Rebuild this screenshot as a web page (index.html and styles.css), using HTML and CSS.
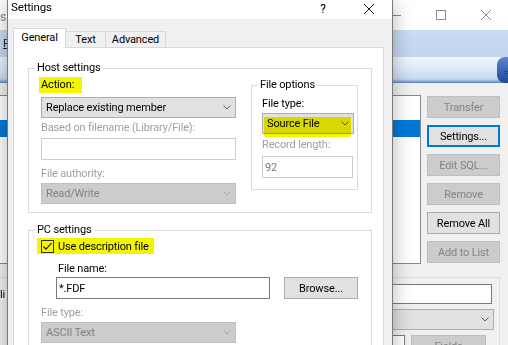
FILE: index.html
```html
<!DOCTYPE html>
<html lang="en">
<head>
  <meta charset="UTF-8">
  <title>Settings</title>
  <meta name="viewport" content="width=device-width, initial-scale=1.0">
  <link rel="stylesheet" href="styles.css">
</head>
<body>
  <div class="desktop">

    <!-- main window, behind the dialog -->
    <div class="app">
      <div class="app-title">
        <span class="app-name">s</span>
        <div class="caption">
          <span class="cap-btn"><svg width="10" height="10" viewBox="0 0 10 10"><path d="M0 5.5h10" stroke="#8c8c8c"/></svg></span>
          <span class="cap-btn"><svg width="10" height="10" viewBox="0 0 10 10"><rect x="0.5" y="0.5" width="9" height="9" fill="none" stroke="#8c8c8c"/></svg></span>
          <span class="cap-btn"><svg width="10" height="10" viewBox="0 0 10 10"><path d="M0 0l10 10M10 0L0 10" stroke="#8c8c8c"/></svg></span>
        </div>
      </div>
      <div class="ribbon"><span class="menu-key">F</span></div>
      <div class="ribbon-bar"><span class="ribbon-end">=</span></div>
      <div class="app-body">
        <div class="app-main">
          <div class="listbox"><div class="list-sel"></div></div>
          <div class="btn-col">
            <div class="btn off">Transfer</div>
            <div class="btn default">Settings...</div>
            <div class="btn off">Edit SQL...</div>
            <div class="btn off">Remove</div>
            <div class="btn">Remove All</div>
            <div class="btn off">Add to List</div>
          </div>
        </div>
        <div class="app-group">
          <div class="app-row">
            <span class="app-label">li</span>
            <span class="box app-text"></span>
          </div>
          <div class="app-row">
            <span class="combo app-combo"><span></span><svg class="chev" width="8" height="5" viewBox="0 0 8 5"><path d="M.5.5 4 4 7.5.5" fill="none" stroke="#606060"/></svg></span>
          </div>
          <div class="app-row">
            <span class="box app-small"></span>
            <span class="btn off app-fields">Fields</span>
          </div>
        </div>
      </div>
    </div>

    <!-- settings dialog -->
    <div class="dialog">
      <div class="dlg-title">
        <span class="dlg-name">Settings</span>
        <span class="dlg-cap help">?</span>
        <span class="dlg-cap"><svg width="10" height="10" viewBox="0 0 10 10"><path d="M0 0l10 10M10 0L0 10" stroke="#1a1a1a"/></svg></span>
      </div>
      <div class="dlg-body">
        <div class="tabs">
          <span class="tab active tab-general">General</span>
          <span class="tab tab-text">Text</span>
          <span class="tab tab-adv">Advanced</span>
        </div>
        <div class="tab-page">

          <fieldset class="group host">
            <legend>Host settings</legend>
            <div class="host-cols">
              <div class="host-left">
                <div class="label lbl-action"><span class="marker">Action:</span></div>
                <div class="combo mt4">
                  <span>Replace existing member</span>
                  <svg class="chev" width="8" height="5" viewBox="0 0 8 5"><path d="M.5.5 4 4 7.5.5" fill="none" stroke="#606060"/></svg>
                </div>
                <div class="label off mt2">Based on filename (Library/File):</div>
                <div class="box off mt2 tall"></div>
                <div class="label off mt6">File authority:</div>
                <div class="combo off mt1">
                  <span>Read/Write</span>
                  <svg class="chev" width="8" height="5" viewBox="0 0 8 5"><path d="M.5.5 4 4 7.5.5" fill="none" stroke="#a9a9a9"/></svg>
                </div>
              </div>

              <fieldset class="group file-opts">
                <legend>File options</legend>
                <div class="label mt3">File type:</div>
                <div class="combo marked mt1">
                  <span>Source File</span>
                  <svg class="chev" width="8" height="5" viewBox="0 0 8 5"><path d="M.5.5 4 4 7.5.5" fill="none" stroke="#606060"/></svg>
                </div>
                <div class="label off mt3">Record length:</div>
                <div class="box off mt3 tall rec">92</div>
              </fieldset>
            </div>
          </fieldset>

          <fieldset class="group pc">
            <legend>PC settings</legend>
            <div class="check-row">
              <svg width="13" height="13" viewBox="0 0 13 13"><rect x="0.5" y="0.5" width="12" height="12" fill="none" stroke="#333"/><path d="M2.5 6.5l2.5 2.7 5.5-6" fill="none" stroke="#222" stroke-width="1.2"/></svg>
              <span>Use description file</span>
            </div>
            <div class="label indent mt7">File name:</div>
            <div class="name-row">
              <div class="box name">*.FDF</div>
              <div class="btn browse">Browse...</div>
            </div>
            <div class="label off mt6">File type:</div>
            <div class="combo off mt1 pc-type">
              <span>ASCII Text</span>
              <svg class="chev" width="8" height="5" viewBox="0 0 8 5"><path d="M.5.5 4 4 7.5.5" fill="none" stroke="#a9a9a9"/></svg>
            </div>
          </fieldset>

        </div>
      </div>
    </div>

  </div>
</body>
</html>
```

FILE: styles.css
```css
* {
  box-sizing: border-box;
}

body {
  margin: 0;
  font-family: Roboto, "Liberation Sans", sans-serif;
  font-size: 11px;
  letter-spacing: -0.15px;
  color: #000;
  overflow: hidden;
}

.desktop {
  position: relative;
  width: 508px;
  height: 345px;
  overflow: hidden;
  background: #f0f0f0;
}

/* ---- main window behind ---- */

.app {
  position: absolute;
  left: 0;
  top: 0;
  width: 508px;
  height: 345px;
  display: flex;
  flex-direction: column;
  background: #f0f0f0;
}

.app-title {
  height: 30px;
  flex: none;
  background: #fff;
  display: flex;
  align-items: center;
}

.app-name {
  font-size: 12px;
  color: #8a8a8a;
  margin-top: 4px;
}

.caption {
  margin-left: auto;
  display: flex;
}

.cap-btn {
  width: 45px;
  height: 30px;
  display: flex;
  align-items: center;
  justify-content: center;
}

.ribbon {
  height: 27px;
  flex: none;
  padding-left: 3px;
  line-height: 27px;
  background: linear-gradient(#cbdcf3, #c1d5ef);
}

.menu-key {
  color: #1f1f1f;
  text-decoration: underline;
}

.ribbon-bar {
  height: 26px;
  flex: none;
  display: flex;
  justify-content: flex-end;
  background: linear-gradient(#f1f6fd, #dde9f9 45%, #c6d9f2 85%, #5a7fbf);
}

.ribbon-end {
  width: 11px;
  border-radius: 8px 0 0 8px;
  background: linear-gradient(#5d86cc, #1d4996);
  color: #0d1f40;
  font-size: 9px;
  line-height: 32px;
  text-align: right;
}

.app-body {
  flex: 1;
  padding-top: 12px;
}

.app-main {
  display: flex;
  gap: 6px;
}

.listbox {
  width: 421px;
  height: 169px;
  background: #fff;
  border: 1px solid #828790;
  border-left: none;
}

.list-sel {
  height: 17px;
  margin-top: 24px;
  background: #0078d7;
}

.btn-col {
  width: 73px;
  padding-top: 1px;
  display: flex;
  flex-direction: column;
  gap: 7px;
}

.btn {
  height: 22px;
  background: #e1e1e1;
  border: 1px solid #adadad;
  display: flex;
  align-items: center;
  justify-content: center;
  white-space: nowrap;
}

.btn.off {
  background: #cccccc;
  border-color: #bfbfbf;
  color: #838383;
}

.btn.default {
  border: 2px solid #0078d7;
}

.app-group {
  width: 500px;
  margin-top: 13px;
  padding-top: 6px;
  border-top: 1px solid #dcdcdc;
  border-right: 1px solid #dcdcdc;
  display: flex;
  flex-direction: column;
  gap: 5px;
}

.app-row {
  display: flex;
  align-items: center;
}

.app-label {
  width: 60px;
}

.app-text {
  flex: 1;
  height: 20px;
  margin-right: 7px;
}

.app-combo {
  flex: 1;
  margin-left: 60px;
  margin-right: 5px;
}

.app-small {
  width: 65px;
  height: 22px;
  margin-left: 340px;
}

.app-fields {
  width: 75px;
  margin-left: 6px;
  align-items: flex-start;
  padding-top: 4px;
}

/* ---- controls ---- */

.label {
  height: 16px;
  line-height: 16px;
  white-space: nowrap;
}

.label.off {
  color: #a0a0a0;
}

.indent {
  margin-left: 17px;
}

.box {
  background: #fff;
  border: 1px solid #7a7a7a;
  padding-left: 2px;
  display: flex;
  align-items: center;
  white-space: nowrap;
}

.box.off {
  border-color: #cccccc;
  color: #7a7a7a;
}

.box.tall {
  height: 22px;
}

.combo {
  position: relative;
  height: 21px;
  padding: 0 4px;
  background: #e1e1e1;
  border: 1px solid #adadad;
  display: flex;
  align-items: center;
  justify-content: space-between;
  white-space: nowrap;
}

.combo.off {
  background: #cccccc;
  border-color: #bfbfbf;
  color: #838383;
}

/* highlighter strokes */
.marker {
  display: inline-block;
  margin-left: -2px;
  padding: 0 8px 0 2px;
  background: #f5f500;
}

.combo.marked::after {
  content: "";
  position: absolute;
  left: 1px;
  right: 2px;
  top: 3px;
  bottom: -4px;
  background: #f5f500;
  border-radius: 0 0 3px 2px;
  mix-blend-mode: multiply;
}

.mt1 { margin-top: 1px; }
.mt2 { margin-top: 2px; }
.mt3 { margin-top: 3px; }
.mt4 { margin-top: 4px; }
.mt6 { margin-top: 6px; }
.mt7 { margin-top: 7px; }

/* ---- dialog ---- */

.dialog {
  position: absolute;
  left: 7px;
  top: -1px;
  width: 386px;
  height: 370px;
  display: flex;
  flex-direction: column;
  background: #f0f0f0;
  border: 1px solid #7a7a7a;
  box-shadow: 0 4px 18px rgba(0, 0, 0, 0.3);
}

.dlg-title {
  height: 19px;
  flex: none;
  display: flex;
  background: #fff;
}

.dlg-name {
  padding-left: 3px;
  font-size: 11.5px;
  line-height: 14px;
}

.dlg-cap {
  width: 46px;
  height: 18px;
  display: flex;
  align-items: center;
  justify-content: center;
  font-size: 12px;
}

.dlg-cap.help {
  margin-left: auto;
}

.dlg-body {
  flex: 1;
  padding: 9px 8px 0 5px;
  display: flex;
  flex-direction: column;
}

.tabs {
  height: 19px;
  flex: none;
  display: flex;
  align-items: flex-end;
  position: relative;
  z-index: 1;
}

.tab {
  height: 16px;
  line-height: 15px;
  text-align: center;
  background: #f0f0f0;
  border: 1px solid #d9d9d9;
  border-bottom: none;
}

.tab + .tab {
  margin-left: -1px;
}

.tab.active {
  height: 20px;
  line-height: 18px;
  margin-bottom: -1px;
  background: #fff;
}

.tab-general { width: 53px; }
.tab-text { width: 41px; }
.tab-adv { width: 61px; }

.tab-page {
  flex: 1;
  padding: 0 11px 0 14px;
  background: #fff;
  border: 1px solid #d9d9d9;
}

.group {
  margin: 0;
  min-width: 0;
  border: 1px solid #dcdcdc;
}

.group > legend {
  height: 16px;
  padding: 0 2px;
  line-height: 16px;
}

.host {
  margin-top: 12px;
  padding: 0 12px 8px 12px;
}

.host > legend,
.pc > legend {
  margin-left: -6px;
}

.host-cols {
  display: flex;
  align-items: flex-start;
}

.host-left {
  width: 195px;
}

.lbl-action {
  margin-top: 1px;
}

.file-opts {
  width: 107px;
  margin-left: 15px;
  margin-top: 1px;
  padding: 0 3px 11px 10px;
}

.file-opts > legend {
  margin-left: -4px;
}

.rec {
  width: 91px;
}

.pc {
  margin-top: 9px;
  padding: 0 12px 20px 12px;
}

.check-row {
  width: fit-content;
  height: 16px;
  margin-left: -4px;
  padding: 0 5px 0 4px;
  display: flex;
  align-items: center;
  gap: 4px;
  background: #f5f500;
}

.name-row {
  display: flex;
  margin-left: 15px;
}

.name {
  width: 214px;
  height: 22px;
}

.browse {
  width: 74px;
  margin-left: 14px;
}

.pc-type {
  width: 195px;
}
```
